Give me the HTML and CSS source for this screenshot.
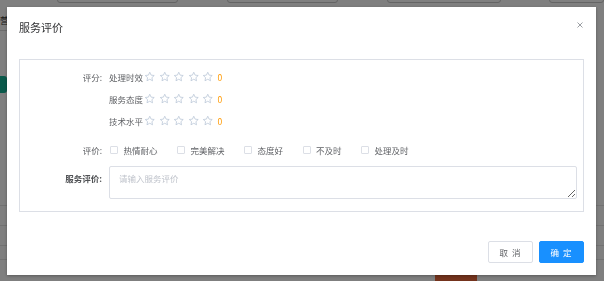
FILE: index.html
```
<!DOCTYPE html>
<html lang="zh-CN">
<head>
    <meta charset="UTF-8">
    <meta name="viewport" content="width=device-width, initial-scale=1.0">
    <title>服务评价</title>
    <link rel="stylesheet" href="styles.css">
</head>
<body>
    <!-- 底层页面 -->
    <div class="page">
        <div class="filters">
            <div class="filter-box f1"></div>
            <div class="filter-box f2"></div>
            <div class="filter-box f3"></div>
            <div class="filter-box f4"></div>
        </div>
        <div class="side-title">运营</div>
        <div class="side-btn">新增</div>
        <div class="table">
            <div class="table-line"></div>
            <div class="table-line"></div>
            <div class="table-line"></div>
            <div class="table-row">
                <span class="cell c1">办公设备</span>
                <span class="cell c2">打印机01</span>
                <span class="cell c3"><span class="tag">高计出</span></span>
                <span class="cell c4">货号科技</span>
            </div>
        </div>
    </div>

    <!-- 弹窗 -->
    <div class="mask">
        <div class="dialog">
            <div class="dialog-header">
                <span class="dialog-title">服务评价</span>
                <span class="dialog-close">
                    <svg viewBox="0 0 6 6"><line x1="0.5" y1="0.5" x2="5.5" y2="5.5"/><line x1="5.5" y1="0.5" x2="0.5" y2="5.5"/></svg>
                </span>
            </div>
            <div class="dialog-body">
                <div class="form-box">
                    <div class="form-item">
                        <div class="form-label">评分:</div>
                        <div class="form-content" id="rates"></div>
                    </div>
                    <div class="form-item check-item">
                        <div class="form-label">评价:</div>
                        <div class="form-content checks">
                            <label class="check"><span class="check-box"></span>热情耐心</label>
                            <label class="check"><span class="check-box"></span>完美解决</label>
                            <label class="check"><span class="check-box"></span>态度好</label>
                            <label class="check"><span class="check-box"></span>不及时</label>
                            <label class="check"><span class="check-box"></span>处理及时</label>
                        </div>
                    </div>
                    <div class="form-item text-item">
                        <div class="form-label strong">服务评价:</div>
                        <div class="form-content">
                            <textarea class="textarea" placeholder="请输入服务评价"></textarea>
                        </div>
                    </div>
                </div>
            </div>
            <div class="dialog-footer">
                <button class="btn">取 消</button>
                <button class="btn btn-primary">确 定</button>
            </div>
        </div>
    </div>

    <script>
        // 评分项
        const rateNames = ["处理时效", "服务态度", "技术水平"];
        const starSvg = '<svg class="star" viewBox="0 0 24 24"><path d="M12 2.6l2.8 6 6.5.8-4.8 4.5 1.3 6.5L12 17.2l-5.8 3.2 1.3-6.5-4.8-4.5 6.5-.8z"/></svg>';
        let html = "";
        rateNames.forEach(function (name) {
            html += '<div class="rate-row"><span class="rate-name">' + name + '</span>' +
                starSvg.repeat(5) + '<span class="rate-score">0</span></div>';
        });
        document.getElementById("rates").innerHTML = html;
    </script>
</body>
</html>
```

FILE: styles.css
```
html, body {
    margin: 0;
    padding: 0;
}
body {
    background: #fff;
    font-family: "Noto Sans CJK SC", "Noto Sans", sans-serif;
    color: #606266;
    overflow: hidden;
    height: 281px;
}

/* 底层页面 */
.page {
    font-size: 9px;
    color: #333;
}
.filters {
    display: flex;
    margin-top: -19px;
    height: 22px;
}
.filter-box {
    border: 1px solid #c8c8c8;
    border-radius: 3px;
    box-sizing: border-box;
    height: 22px;
}
.f1 { margin-left: 57px; width: 131px; }
.f2 { margin-left: 49px; width: 121px; }
.f3 { margin-left: 49px; width: 123px; }
.f4 { margin-left: 48px; width: 60px; }
.side-title {
    margin-top: 13px;
    margin-left: -9px;
    line-height: 9px;
    height: 14px;
    border-bottom: 1px solid #d8d8d8;
    width: 80px;
}
.side-btn {
    margin-top: 45px;
    margin-left: -30px;
    width: 37px;
    height: 17px;
    line-height: 17px;
    border-radius: 3px;
    background: #15b295;
    color: #fff;
    text-align: center;
}
.table {
    margin-top: 112px;
}
.table-line {
    height: 20px;
    border-top: 1px solid #e4e4e4;
    box-sizing: border-box;
}
.table-row {
    display: flex;
    height: 20px;
    line-height: 20px;
    border-top: 1px solid #e4e4e4;
    margin-top: -6px;
}
.cell { display: block; }
.c1 { margin-left: 122px; width: 228px; }
.c2 { width: 85px; }
.c3 { width: 90px; }
.c4 { width: 60px; }
.tag {
    display: inline-block;
    background: #e8663a;
    color: #fff;
    padding: 0 8px;
    width: 26px;
}

/* 遮罩和弹窗 */
.mask {
    position: fixed;
    top: 0; right: 0; bottom: 0; left: 0;
    background: rgba(0, 0, 0, 0.5);
    display: flex;
    align-items: center;
    justify-content: center;
}
.dialog {
    width: 589px;
    background: #fff;
    box-shadow: 0 1px 3px rgba(0, 0, 0, 0.3);
    margin-left: -1px;
}
.dialog-header {
    display: flex;
    justify-content: space-between;
    align-items: flex-start;
    padding: 13px 13px 6px 12px;
}
.dialog-title {
    font-size: 11px;
    line-height: 14px;
    color: #303133;
}
.dialog-close {
    width: 6px;
    height: 6px;
    margin-top: 2px;
}
.dialog-close svg {
    display: block;
    width: 6px;
    height: 6px;
    stroke: #909399;
    stroke-width: 0.9;
}
.dialog-body {
    padding: 19px 12px 0 12px;
}
.form-box {
    border: 1px solid #dcdfe6;
    padding: 6px 0 12px 0;
}
.form-item {
    display: flex;
    font-size: 8.5px;
}
.form-label {
    width: 82px;
    margin-right: 7px;
    text-align: right;
    line-height: 22px;
    color: #606266;
}
.form-label.strong {
    font-weight: bold;
    color: #505255;
}
.form-content {
    flex: 1;
}

/* 评分 */
.rate-row {
    display: flex;
    align-items: center;
    height: 22px;
}
.rate-name {
    color: #606266;
    margin-right: 1px;
}
.star {
    width: 11.5px;
    height: 11.5px;
    margin-right: 3px;
    fill: none;
    stroke: #b9c6d6;
    stroke-width: 1.6;
    stroke-linejoin: round;
}
.rate-score {
    color: #ff9900;
    margin-left: 1px;
}

/* 复选框 */
.check-item {
    margin-top: 7px;
}
.checks {
    display: flex;
    align-items: center;
    height: 22px;
    padding-left: 1px;
}
.check {
    display: flex;
    align-items: center;
    margin-right: 19.5px;
    color: #606266;
}
.check-box {
    width: 8px;
    height: 8px;
    border: 1px solid #dcdfe6;
    border-radius: 1px;
    box-sizing: border-box;
    margin-right: 5.5px;
}

/* 文本框 */
.text-item {
    margin-top: 5px;
}
.text-item .form-label {
    line-height: 24px;
}
.textarea {
    display: block;
    width: 468px;
    height: 33px;
    box-sizing: border-box;
    border: 1px solid #dcdfe6;
    border-radius: 2px;
    padding: 5px 9px;
    font-family: "Noto Sans CJK SC", "Noto Sans", sans-serif;
    font-size: 8.5px;
    color: #606266;
    outline: none;
}
.textarea::placeholder {
    color: #c0c4cc;
}

/* 底部按钮 */
.dialog-footer {
    display: flex;
    justify-content: flex-end;
    gap: 6px;
    padding: 29px 12px 12px 12px;
}
.btn {
    width: 45px;
    height: 22px;
    border: 1px solid #dcdfe6;
    border-radius: 2px;
    background: #fff;
    color: #606266;
    font-family: "Noto Sans CJK SC", "Noto Sans", sans-serif;
    font-size: 8.5px;
    padding: 0;
    letter-spacing: 1px;
}
.btn-primary {
    background: #1890ff;
    border-color: #1890ff;
    color: #fff;
}
```
